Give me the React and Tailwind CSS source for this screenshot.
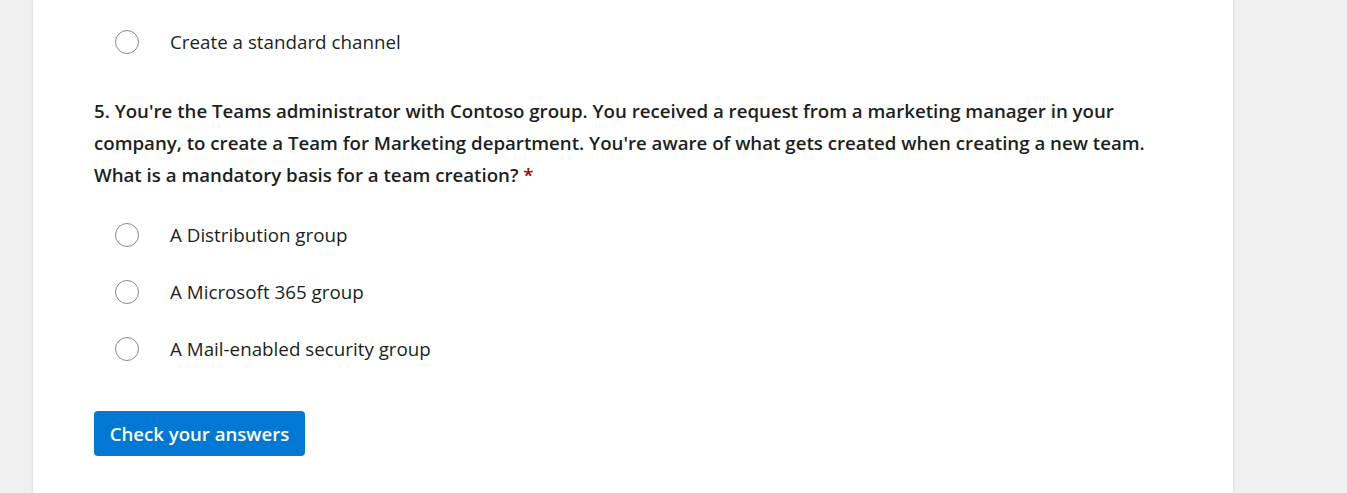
import React from "react";

const Option = ({ label }) => (
  <label className="flex h-[40px] items-center">
    <span className="ml-[21px] h-[24px] w-[24px] rounded-full border border-[#8a8886] bg-white" />
    <span className="ml-[31px] text-[18.8px] text-[#201f1e]">{label}</span>
  </label>
);

export default function App() {
  return (
    <div className="min-h-[493px] bg-[#f0f0f0] font-['Open_Sans',sans-serif]">
      <div className="ml-[33px] min-h-[493px] w-[1200px] bg-white px-[61px] pt-[22px] shadow-[0_0_2px_rgba(0,0,0,0.2)]">
        <Option label="Create a standard channel" />

        <p className="mt-[33px] text-[18.68px] leading-[32px] font-semibold text-[#201f1e]">
          5. You're the Teams administrator with Contoso group. You received a request from a marketing manager in your
          <br />
          company, to create a Team for Marketing department. You're aware of what gets created when creating a new team.
          <br />
          What is a mandatory basis for a team creation? <span className="text-[#a80000]">*</span>
        </p>

        <div className="mt-[24px] flex flex-col gap-[17px]">
          <Option label="A Distribution group" />
          <Option label="A Microsoft 365 group" />
          <Option label="A Mail-enabled security group" />
        </div>

        <button className="mt-[42px] h-[45px] w-[211px] rounded-[4px] bg-[#0078d4] text-[18.6px] font-semibold text-white">
          Check your answers
        </button>
      </div>
    </div>
  );
}
